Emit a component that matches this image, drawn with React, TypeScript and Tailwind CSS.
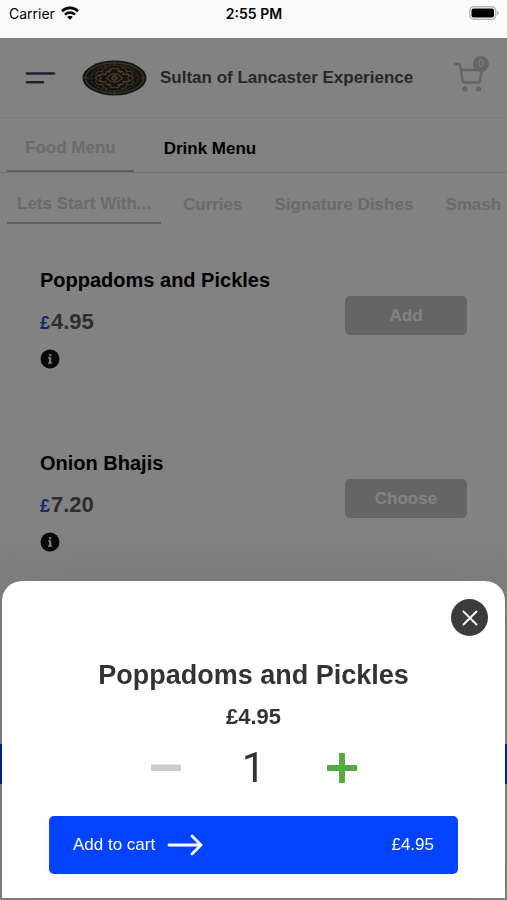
import React from "react";
import clsx from "clsx";

const categories = ["Lets Start With...", "Curries", "Signature Dishes", "Smash"];

const dishes = [
  { id: 1, title: "Poppadoms and Pickles", price: 4.95, action: "Add" },
  { id: 2, title: "Onion Bhajis", price: 7.2, action: "Choose" },
];

const StatusBar = () => (
  <div className="grid h-[38px] shrink-0 grid-cols-3 items-center bg-[#fbfbfb] pr-2 pb-3 pl-[9px] font-[Inter,sans-serif] text-[14px] text-black">
    <div className="flex items-center gap-1.5">
      <span>Carrier</span>
      <svg width="18" height="14" viewBox="0 0 18 14" fill="none" stroke="currentColor" strokeWidth="2.6">
        <path d="M1 5.2a11.4 11.4 0 0 1 16 0" />
        <path d="M4 8.6a7.1 7.1 0 0 1 10 0" />
        <path d="M9 13.8 6.2 11a4 4 0 0 1 5.6 0z" fill="currentColor" stroke="none" />
      </svg>
    </div>
    <span className="text-center font-semibold">2:55 PM</span>
    <svg className="justify-self-end" width="30" height="14" viewBox="0 0 30 14">
      <rect x="0.75" y="0.75" width="26" height="12.5" rx="4" fill="#fff" stroke="#b5b5b5" strokeWidth="1.5" />
      <rect x="2.5" y="2.5" width="22.5" height="9" rx="2" />
      <path d="M28 4.8c2.2.6 2.2 3.8 0 4.4z" fill="#b5b5b5" />
    </svg>
  </div>
);

const Logo = () => (
  <svg width="65" height="36" viewBox="0 0 65 36" fill="none">
    <ellipse cx="32.5" cy="18" rx="32" ry="17.5" fill="#2c2630" />
    <ellipse cx="32.5" cy="18" rx="29" ry="15" stroke="#6f6532" strokeWidth="1.6" />
    <ellipse cx="32.5" cy="18" rx="23.5" ry="12.8" stroke="#7c6e34" strokeWidth="1" strokeDasharray="3 1" />
    <g transform="translate(32.5 18)" stroke="#94803a" strokeWidth="1.1">
      {["scale(1 1)", "scale(-1 1)", "scale(1 -1)", "scale(-1 -1)"].map((flip) => (
        <g key={flip} transform={flip}>
          <path d="M0-4C4-5 5-2 8 0M0-9C3-11 6-8 4-6 9-8 10-4 8-3 12-5 17-3 19 0" />
          <path d="M7-11C10-10 13-9 12-6 16-8 18-6 19-3" stroke="#7d7a38" />
          <path d="M3-7C4-9 7-8 6-5" stroke="#a5653a" />
          <path d="M13-3C15-2 15-1 13 0" stroke="#a5653a" />
        </g>
      ))}
      <path d="M-3 0 0-3 3 0 0 3Z" fill="#5b4c2d" />
    </g>
    <path d="M32.5 1v5M32.5 30v5M1 18h6M58 18h6" stroke="#7c6e34" />
  </svg>
);

const Header = () => (
  <header className="flex h-20 items-center border-b border-[#f0f0f0] pr-[18px] pl-[25px]">
    <button aria-label="Open menu" className="shrink-0">
      <svg width="31" height="12" viewBox="0 0 31 12" stroke="#3a4462" strokeWidth="2.6" strokeLinecap="round">
        <path d="M2 1.5h27M2 10.3h16" />
      </svg>
    </button>
    <div className="ml-[26px] shrink-0">
      <Logo />
    </div>
    <h1 className="ml-[13px] flex-1 text-[17px] font-bold whitespace-nowrap text-[#4e4e4e]">
      Sultan of Lancaster Experience
    </h1>
    <button aria-label="Cart" className="relative mb-0.5 flex shrink-0 items-end">
      <svg width="36" height="30" viewBox="0 0 36 30" fill="none" stroke="#c4c8c8" strokeWidth="2.4" strokeLinecap="round" strokeLinejoin="round">
        <path d="M2 2h4.5l1.5 6h21l-2 10.5a2.500 2.500 0 0 1-2.500 2H12a2.500 2.500 0 0 1-2.500-2L8 8" />
        <circle cx="12" cy="27" r="1.400" fill="#c4c8c8" />
        <circle cx="25.500" cy="27" r="1.400" fill="#c4c8c8" />
      </svg>
      <span className="absolute -top-1.5 right-0 flex size-4 items-center justify-center rounded-full bg-[#c4c8c8] text-[10px] text-white">
        0
      </span>
    </button>
  </header>
);

const Tabs = () => (
  <>
    <nav className="flex h-[55px] gap-3 border-b border-[#dedede] pl-[7px] text-[17px] font-bold">
      <button className="border-b-2 border-[#b8bcbc] px-[18px] pt-2 text-[#cfd3d3]">Food Menu</button>
      <button className="px-[18px] pt-2 text-black">Drink Menu</button>
    </nav>
    <nav className="flex h-[51px] overflow-hidden pl-[7px] text-[17px] font-bold text-[#cfd3d3]">
      {categories.map((category, index) => (
        <button
          key={category}
          className={clsx(
            "shrink-0 whitespace-nowrap pt-3",
            index === 0 ? "mr-1.5 border-b-2 border-[#b8bcbc] px-2.5" : "px-4"
          )}
        >
          {category}
        </button>
      ))}
    </nav>
  </>
);

const InfoIcon = () => (
  <svg width="20" height="20" viewBox="0 0 20 20">
    <circle cx="10" cy="10" r="9.5" fill="#111" />
    <path d="M8 8.300h3.200v5.200h1v1.300H8v-1.300h1.100V9.600H8zM9 5.200h2.200v2H9z" fill="#fff" />
  </svg>
);

const App = () => {
  const [quantity, setQuantity] = React.useState(1);
  const total = (4.95 * quantity).toFixed(2);

  return (
    <div className="flex min-h-screen flex-col font-['Liberation_Sans',Arial,sans-serif]">
      <StatusBar />
      <div className="relative flex flex-1 flex-col bg-white">
        <Header />
        <Tabs />
        <main className="flex flex-1 flex-col gap-[21px] bg-[#fdfdfd] pt-[18px]">
          {dishes.map((dish) => (
            <article key={dish.id} className="mx-4 flex h-[162px] items-start justify-between rounded-lg bg-white px-6 py-[26px]">
              <div>
                <h2 className="text-[20px] leading-6 font-bold text-black">{dish.title}</h2>
                <p className="mt-4 mb-3 flex items-baseline gap-px text-[22px] leading-7 font-bold text-[#5a5a5a]">
                  <span className="text-[18px] text-[#2a4fe0]">£</span>
                  {dish.price.toFixed(2)}
                </p>
                <button aria-label="Allergen information" className="block">
                  <InfoIcon />
                </button>
              </div>
              <button className="mt-7 h-[39px] w-[122px] rounded-[5px] bg-[#c2c8ca] text-[17px] font-bold text-white">
                {dish.action}
              </button>
            </article>
          ))}
          <div className="mt-auto mb-[116px] h-10 bg-[#0443ff]" />
        </main>
        <div className="absolute inset-0 bg-black/49" />
      </div>

      <section
        role="dialog"
        aria-label="Poppadoms and Pickles"
        className="fixed inset-x-0.5 bottom-0.5 rounded-t-[20px] bg-white px-[47px] pt-[18px] pb-6 text-center text-[#333] shadow-[0_0_50px_rgba(0,0,0,0.12)]"
      >
        <button
          aria-label="Close"
          className="-mr-[30px] ml-auto flex size-[37px] items-center justify-center rounded-full bg-[#3b3b3b]"
        >
          <svg width="16" height="16" viewBox="0 0 16 16" stroke="#fff" strokeWidth="1.8" strokeLinecap="round">
            <path d="M1.5 1.5l13 13M14.5 1.5l-13 13" />
          </svg>
        </button>
        <h2 className="mt-[23px] text-[27px] leading-8 font-bold">Poppadoms and Pickles</h2>
        <p className="mt-3 text-[22px] leading-7 font-bold">£4.95</p>
        <div className="mt-3 flex h-[50px] items-center justify-center gap-[53px]">
          <button aria-label="Remove one" onClick={() => setQuantity(Math.max(1, quantity - 1))}>
            <svg width="30" height="30" viewBox="0 0 30 30" fill="#ccc">
              <path d="M0 11.500h30v6.500H0z" />
            </svg>
          </button>
          <span className="w-10 font-[Roboto,sans-serif] text-[42px] leading-[48px]">{quantity}</span>
          <button aria-label="Add one" onClick={() => setQuantity(quantity + 1)}>
            <svg width="30" height="30" viewBox="0 0 30 30" fill="#55ab42">
              <path d="M12 0h6v12h12v6H18v12h-6V18H0v-6h12z" />
            </svg>
          </button>
        </div>
        <button className="mt-[23px] flex h-[58px] w-full items-center rounded-[5px] bg-[#0443ff] px-6 text-[17px] text-white">
          <span>Add to cart</span>
          <svg className="ml-3" width="36" height="22" viewBox="0 0 36 22" fill="none" stroke="currentColor" strokeWidth="2.8" strokeLinecap="round" strokeLinejoin="round">
            <path d="M2 11h32M25 2l9 9-9 9" />
          </svg>
          <span className="ml-auto">£{total}</span>
        </button>
      </section>
    </div>
  );
};

export default App;
